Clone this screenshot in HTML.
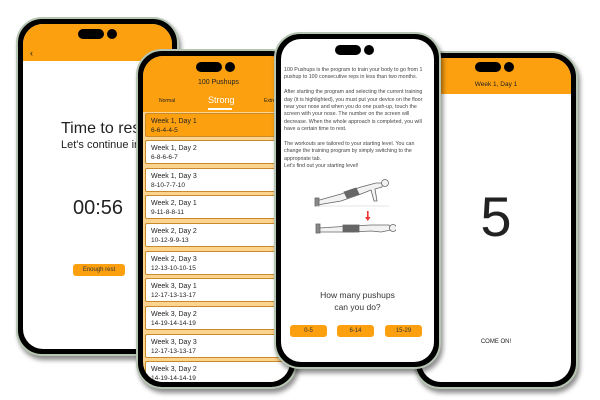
<!DOCTYPE html>
<html><head><meta charset="utf-8"><style>
*{margin:0;padding:0;box-sizing:border-box}
body{width:600px;height:400px;background:#fff;position:relative;overflow:hidden;font-family:"Liberation Sans",sans-serif;color:#222}
.ph{position:absolute;border-radius:26px;background:#000;border:2px solid #b7c5b3;box-shadow:2px 4px 5px rgba(0,0,0,.45)}
.sc{position:absolute;left:5px;top:5px;right:5px;bottom:5px;border-radius:20px;background:#fff;overflow:hidden}
.isl{position:absolute;height:10px;border-radius:5px;background:#000}
.cam{position:absolute;width:10px;height:10px;border-radius:50%;background:#000}
.ab{position:absolute}
.or{background:#fca010}
.it{position:absolute;left:2px;width:150px;height:24px;background:#fff;border:1px solid #c98a2a;border-radius:2px;font-size:6.5px;padding:3px 5px;line-height:9px}
.it b{font-weight:normal;font-size:7px;display:block}
.btn{position:absolute;background:#fca010;border-radius:3px;font-size:6px;text-align:center;line-height:12px;color:#333}
</style></head><body>

<!-- Phone 1 -->
<div class="ph" style="left:16px;top:17px;width:163px;height:339px">
 <div class="sc">
  <div class="ab or" style="left:0;top:0;width:100%;height:37px"></div>
  <div class="isl" style="left:55px;top:5px;width:26px"></div>
  <div class="cam" style="left:84px;top:5px"></div>
  <div class="ab" style="left:7px;top:24px;font-size:9px">&#8249;</div>
  <div class="ab" style="left:38px;top:96px;font-size:16px;white-space:nowrap">Time to rest!</div>
  <div class="ab" style="left:38px;top:115px;font-size:11px;white-space:nowrap">Let's continue in</div>
  <div class="ab" style="left:50px;top:173px;font-size:20px">00:56</div>
  <div class="btn" style="left:50px;top:240px;width:52px;height:12px">Enough rest</div>
 </div>
</div>

<!-- Phone 4 -->
<div class="ph" style="left:414px;top:51px;width:164px;height:338px">
 <div class="sc">
  <div class="ab or" style="left:0;top:0;width:100%;height:36px"></div>
  <div class="isl" style="left:54px;top:4px;width:26px"></div>
  <div class="cam" style="left:83px;top:4px"></div>
  <div class="ab" style="left:0;width:100%;top:23px;font-size:6.5px;text-align:center">Week 1, Day 1</div>
  <div class="ab" style="left:0;width:100%;top:126px;font-size:56px;text-align:center;font-weight:300">5</div>
  <div class="ab" style="left:0;width:100%;top:281px;font-size:6px;text-align:center">COME ON!</div>
 </div>
</div>

<!-- Phone 2 -->
<div class="ph" style="left:136px;top:49px;width:161px;height:340px">
 <div class="sc" style="background:#fdd390">
  <div class="ab or" style="left:0;top:0;width:100%;height:56px"></div>
  <div class="isl" style="left:53px;top:6px;width:26px"></div>
  <div class="cam" style="left:82px;top:6px"></div>
  <div class="ab" style="left:55px;top:23px;font-size:7px">100 Pushups</div>
  <div class="ab" style="left:16px;top:42px;font-size:5px">Normal</div>
  <div class="ab" style="left:65px;top:39px;font-size:9px;color:#fff">Strong</div>
  <div class="ab" style="left:65px;top:52px;width:24px;height:1.5px;background:#fff"></div>
  <div class="ab" style="left:121px;top:42px;font-size:5px">Extreme</div>
  <div class="it" style="top:57px;background:#fca010"><b>Week 1, Day 1</b>6-6-4-4-5</div>
  <div class="it" style="top:84px"><b>Week 1, Day 2</b>6-8-6-6-7</div>
  <div class="it" style="top:112px"><b>Week 1, Day 3</b>8-10-7-7-10</div>
  <div class="it" style="top:139px"><b>Week 2, Day 1</b>9-11-8-8-11</div>
  <div class="it" style="top:167px"><b>Week 2, Day 2</b>10-12-9-9-13</div>
  <div class="it" style="top:195px"><b>Week 2, Day 3</b>12-13-10-10-15</div>
  <div class="it" style="top:222px"><b>Week 3, Day 1</b>12-17-13-13-17</div>
  <div class="it" style="top:250px"><b>Week 3, Day 2</b>14-19-14-14-19</div>
  <div class="it" style="top:278px"><b>Week 3, Day 3</b>12-17-13-13-17</div>
  <div class="it" style="top:305px"><b>Week 3, Day 2</b>14-19-14-14-19</div>
 </div>
</div>

<!-- Phone 3 -->
<div class="ph" style="left:274px;top:32px;width:167px;height:337px">
 <div class="sc">
  <div class="isl" style="left:54px;top:6px;width:26px"></div>
  <div class="cam" style="left:83px;top:6px"></div>
  <div class="ab" style="left:3px;top:28px;width:148px;font-size:5.3px;line-height:7.4px;color:#444">100 Pushups is the program to train your body to go from 1 pushup to 100 consecutive reps in less than two months.<br><br>After starting the program and selecting the current training day (it is highlighted), you must put your device on the floor near your nose and when you do one push-up, touch the screen with your nose. The number on the screen will decrease. When the whole approach is completed, you will have a certain time to rest.<br><br>The workouts are tailored to your starting level. You can change the training program by simply switching to the appropriate tab.<br>Let's find out your starting level!</div>
  <svg class="ab" style="left:30px;top:134px" width="85" height="62" viewBox="0 0 85 62">
   <g stroke="#666" stroke-width=".8" fill="#f2f2f2">
    <path d="M5 28 L30 21 L50 14 L65 10 L72 10 L71 14 L64 16 L66 28 L63 28 L60 17 L50 21 L30 28 L6 32 Z"/>
    <path d="M33 19 L45 15 L48 21 L36 25 Z" fill="#666"/>
    <circle cx="74" cy="10" r="3.5"/>
    <rect x="4" y="25" width="4" height="8" fill="#888"/>
    <path d="M8 55 L40 53 L60 52 L78 52 L80 57 L70 59 L60 58 L40 59 L8 59 Z"/>
    <rect x="32" y="52" width="16" height="7" fill="#666"/>
    <circle cx="82" cy="55" r="3.5"/>
    <rect x="5" y="51" width="4" height="9" fill="#888"/>
   </g>
   <path d="M5 33 L78 33" stroke="#ccc" stroke-width=".5"/>
   <rect x="56" y="38" width="1.6" height="7" fill="#e33"/>
   <path d="M54 44 L59.5 44 L56.8 48 Z" fill="#e33"/>
  </svg>
  <div class="ab" style="left:0;width:100%;top:250px;font-size:8.5px;text-align:center;line-height:12px;color:#333">How many pushups<br>can you do?</div>
  <div class="btn" style="left:9px;top:286px;width:37px;height:12px">0-5</div>
  <div class="btn" style="left:56px;top:286px;width:37px;height:12px">6-14</div>
  <div class="btn" style="left:104px;top:286px;width:37px;height:12px">15-29</div>
 </div>
</div>

</body></html>
